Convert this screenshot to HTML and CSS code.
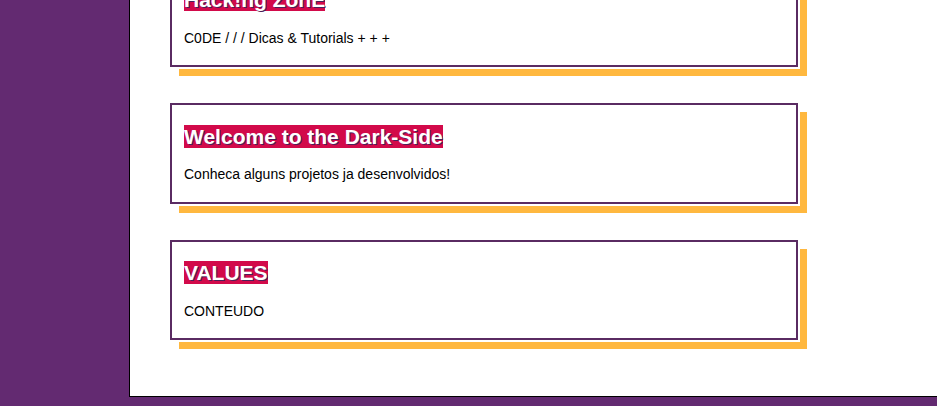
FILE: index.html
```html
<!DOCTYPE html>
<html lang="pt">
<head>
<meta charset="utf-8">
<title>Hacking Zone</title>
<link rel="stylesheet" href="styles.css">
</head>
<body>
<main class="page">
  <section class="card card-first">
    <h2><span class="tag">Hack!ng ZonE</span></h2>
    <p>C0DE / / / Dicas &amp; Tutorials + + +</p>
  </section>
  <section class="card">
    <h2><span class="tag">Welcome to the Dark-Side</span></h2>
    <p>Conheca alguns projetos ja desenvolvidos!</p>
  </section>
  <section class="card">
    <h2><span class="tag">VALUES</span></h2>
    <p>CONTEUDO</p>
  </section>
</main>
</body>
</html>
```
FILE: styles.css
```css
html, body {
  margin: 0;
  padding: 0;
  overflow: hidden;
}
body {
  background: #632a71;
  font-family: "Liberation Sans", Arial, sans-serif;
  color: #000;
  height: 406px;
}
.page {
  margin-left: 129px;
  background: #fff;
  border-left: 1px solid #000;
  border-bottom: 1px solid #000;
  padding: 0 0 20px 40px;
  display: flow-root;
}
.card {
  box-sizing: border-box;
  width: 628px;
  height: 100.5px;
  margin: 0 0 36px 0;
  padding: 5px 12px;
  border: 2px solid #5a2b62;
  box-shadow: 0 0 0 2px #fff, 9px 9px 0 0 #ffb83f;
  background: #fff;
}
.card-first {
  margin-top: -33.5px;
}
.card h2 {
  font-size: 21px;
  font-weight: bold;
  margin: 14.6px 0 18.6px;
  line-height: 23px;
}
.tag {
  background: #d20a4a;
  color: #fff;
  text-shadow: 1px 1px 0 #4a2058;
}
.card p {
  font-size: 14px;
  margin: 14px 0;
  line-height: normal;
}
```
